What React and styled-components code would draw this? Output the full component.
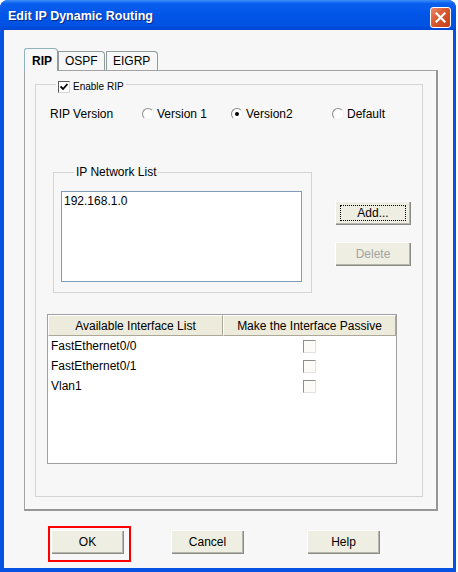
import React from "react";
import styled, { createGlobalStyle } from "styled-components";

const GlobalStyle = createGlobalStyle`
  html, body {
    margin: 0;
    padding: 0;
    background: #ffffff;
  }
  body {
    font-family: "Liberation Sans", Arial, sans-serif;
    font-size: 12px;
    color: #000;
  }
`;

const Window = styled.div`
  width: 456px;
  height: 572px;
  display: flex;
  flex-direction: column;
  background: #0552e3;
  border-radius: 8px 8px 0 0;
  overflow: hidden;
`;

const TitleBar = styled.div`
  height: 30px;
  flex: none;
  display: flex;
  align-items: center;
  justify-content: space-between;
  padding: 0 5px 0 8px;
  background: linear-gradient(
    to bottom,
    #3d8ef8 0%,
    #0a5fee 12%,
    #0056e8 45%,
    #0052e2 85%,
    #0047d2 100%
  );
`;

const Title = styled.span`
  color: #fff;
  font-weight: bold;
  font-size: 12.5px;
  text-shadow: 1px 1px 0 #0a2a8a;
  padding-top: 2px;
`;

const CloseButton = styled.div`
  width: 19px;
  height: 19px;
  margin-top: 4px;
  border: 1px solid #fff;
  border-radius: 3px;
  background: linear-gradient(135deg, #e98a6c 0%, #d9582f 45%, #c2401a 100%);
  display: flex;
  align-items: center;
  justify-content: center;
`;

const Client = styled.div`
  flex: 1;
  margin: 0 3px 4px 4px;
  background: #f7f7f7;
  padding: 18px 0 0 20px;
`;

const TabStrip = styled.div`
  display: flex;
  align-items: flex-end;
  height: 22px;
`;

const Tab = styled.div`
  box-sizing: border-box;
  width: ${(p) => p.$w}px;
  height: ${(p) => (p.$active ? 23 : 19)}px;
  margin-bottom: ${(p) => (p.$active ? -1 : 0)}px;
  margin-right: ${(p) => (p.$active ? 0 : 1)}px;
  position: relative;
  z-index: ${(p) => (p.$active ? 2 : 0)};
  display: flex;
  align-items: ${(p) => (p.$active ? "flex-start" : "center")};
  padding: ${(p) => (p.$active ? "5px 0 0 7px" : "0 0 0 6px")};
  background: #f7f7f7;
  border: 1px solid #919b9c;
  border-bottom: none;
  border-top-color: ${(p) => (p.$active ? "#8fb4bd" : "#919b9c")};
  border-left-color: ${(p) => (p.$active ? "#8fb4bd" : "#919b9c")};
  border-radius: ${(p) => (p.$active ? "3px 4px 0 0" : "0 4px 0 0")};
  font-weight: ${(p) => (p.$active ? "bold" : "normal")};
  font-size: 12px;
`;

const Panel = styled.div`
  box-sizing: border-box;
  width: 414px;
  height: 441px;
  border: 1px solid #a3a3a3;
  border-right: 2px solid #969696;
  border-bottom: 2px solid #969696;
  padding: 3px 0 0 10px;
  background: #f7f7f7;
`;

const GroupBox = styled.fieldset`
  box-sizing: border-box;
  width: ${(p) => p.$w}px;
  margin: 0;
  padding: ${(p) => p.$pad || "0"};
  border: 1px solid #d4d4d4;
  min-width: 0;
`;

const Legend = styled.legend`
  margin-left: ${(p) => p.$ml ?? 20}px;
  padding: ${(p) => (p.$check ? "6px 2px 0" : "0 2px")};
  line-height: 14px;
  font-size: ${(p) => (p.$check ? "10px" : "12px")};
  display: flex;
  align-items: center;
  gap: 3px;
`;

const CheckBox = styled.span`
  box-sizing: border-box;
  display: inline-flex;
  align-items: center;
  justify-content: center;
  width: ${(p) => p.$size || 13}px;
  height: ${(p) => p.$size || 13}px;
  background: ${(p) => (p.$dim ? "#fcfbf8" : "#fff")};
  border: 1px solid;
  border-color: ${(p) =>
    p.$dim ? "#8e8e8e #e2e2e2 #e2e2e2 #8e8e8e" : "#5a5a5a #d8d8d8 #d8d8d8 #5a5a5a"};
`;

const VersionRow = styled.div`
  display: grid;
  grid-template-columns: 92px 89px 101px auto;
  align-items: center;
  height: 16px;
  margin: 12px 0 0 14px;
`;

const RadioOption = styled.label`
  display: flex;
  align-items: center;
  gap: 3px;
`;

const Radio = styled.span`
  box-sizing: border-box;
  width: 12px;
  height: 12px;
  border-radius: 50%;
  background: #fff;
  border: 1px solid;
  border-color: #8a8a8a #f0f0f0 #f0f0f0 #8a8a8a;
  display: inline-flex;
  align-items: center;
  justify-content: center;
  &::after {
    content: "";
    width: 4px;
    height: 4px;
    border-radius: 50%;
    background: ${(p) => (p.$on ? "#000" : "transparent")};
  }
`;

const MiddleRow = styled.div`
  display: flex;
  align-items: flex-start;
  margin: 43px 0 0 17px;
`;

const ListBox = styled.div`
  box-sizing: border-box;
  width: 241px;
  height: 91px;
  background: #fff;
  border: 1px solid #7f9db9;
  padding: 2px 2px;
  line-height: 14px;
`;

const ButtonColumn = styled.div`
  display: flex;
  flex-direction: column;
  gap: 17px;
  margin: 36px 0 0 23px;
`;

const Button = styled.button`
  box-sizing: border-box;
  width: ${(p) => p.$w || 73}px;
  height: 24px;
  margin: 0;
  padding: 0;
  font-family: "Liberation Sans", Arial, sans-serif;
  font-size: 12px;
  color: ${(p) => (p.disabled ? "#a3a3a3" : "#000")};
  background: #efeee2;
  border: none;
  box-shadow: inset 1px 1px 0 #ffffff, inset -1px -1px 0 #8a8a86,
    inset -2px -2px 0 #b8b7ae;
  display: flex;
  align-items: center;
  justify-content: center;
`;

const FocusLabel = styled.span`
  border: 1px dotted #000;
  width: 66px;
  height: 16px;
  box-sizing: border-box;
  display: flex;
  align-items: center;
  justify-content: center;
  margin-bottom: 1px;
`;

const Table = styled.div`
  box-sizing: border-box;
  width: 350px;
  height: 150px;
  margin: 21px 0 0 11px;
  border: 1px solid #a0a0a0;
  background: #fff;
`;

const HeaderRow = styled.div`
  display: grid;
  grid-template-columns: 175px 1fr;
  height: 21px;
`;

const HeaderCell = styled.div`
  display: flex;
  align-items: center;
  justify-content: center;
  background: #ecebdc;
  border-top: 1px solid #fff;
  border-left: 1px solid #fff;
  border-right: 1px solid #aca899;
  border-bottom: 1px solid #aca899;
`;

const Row = styled.div`
  display: grid;
  grid-template-columns: 175px 1fr;
  height: 20px;
  align-items: center;
`;

const Cell = styled.div`
  padding-left: ${(p) => (p.$center ? 0 : 3)}px;
  display: flex;
  justify-content: ${(p) => (p.$center ? "center" : "flex-start")};
`;

const ButtonRow = styled.div`
  display: flex;
  align-items: flex-start;
  margin-top: 15px;
  padding-left: 24px;
`;

const RedMark = styled.div`
  border: 2px solid #ff0000;
  padding: 2px 5px 6px 1px;
`;

const Spaced = styled.div`
  margin: 4px 0 0 ${(p) => p.$ml}px;
`;

const interfaces = ["FastEthernet0/0", "FastEthernet0/1", "Vlan1"];

export default function App() {
  return (
    <>
      <GlobalStyle />
      <Window>
        <TitleBar>
          <Title>Edit IP Dynamic Routing</Title>
          <CloseButton>
            <svg width="11" height="11" viewBox="0 0 11 11">
              <path
                d="M1.5 1.5 L9.5 9.5 M9.5 1.5 L1.5 9.5"
                stroke="#fff"
                strokeWidth="2.2"
                strokeLinecap="square"
              />
            </svg>
          </CloseButton>
        </TitleBar>
        <Client>
          <TabStrip>
            <Tab $active $w={34}>RIP</Tab>
            <Tab $w={47}>OSPF</Tab>
            <Tab $w={52}>EIGRP</Tab>
          </TabStrip>
          <Panel>
            <GroupBox $w={388} $pad="0 0 32px 0">
              <Legend $check>
                <CheckBox $size={12}>
                  <svg width="8" height="8" viewBox="0 0 8 8">
                    <path
                      d="M0.5 3.5 L3 6 L7.5 1"
                      stroke="#000"
                      strokeWidth="1.8"
                      fill="none"
                    />
                  </svg>
                </CheckBox>
                Enable RIP
              </Legend>
              <VersionRow>
                <span>RIP Version</span>
                <RadioOption>
                  <Radio />
                  Version 1
                </RadioOption>
                <RadioOption>
                  <Radio $on />
                  Version2
                </RadioOption>
                <RadioOption>
                  <Radio />
                  Default
                </RadioOption>
              </VersionRow>
              <MiddleRow>
                <GroupBox $w={259} $pad="12px 9px 10px 7px">
                  <Legend $ml={13}>IP Network List</Legend>
                  <ListBox>192.168.1.0</ListBox>
                </GroupBox>
                <ButtonColumn>
                  <Button $w={76}>
                    <FocusLabel>Add...</FocusLabel>
                  </Button>
                  <Button $w={76} disabled>
                    Delete
                  </Button>
                </ButtonColumn>
              </MiddleRow>
              <Table>
                <HeaderRow>
                  <HeaderCell>Available Interface List</HeaderCell>
                  <HeaderCell>Make the Interface Passive</HeaderCell>
                </HeaderRow>
                {interfaces.map((name) => (
                  <Row key={name}>
                    <Cell>{name}</Cell>
                    <Cell $center>
                      <CheckBox $dim />
                    </Cell>
                  </Row>
                ))}
              </Table>
            </GroupBox>
          </Panel>
          <ButtonRow>
            <RedMark>
              <Button>OK</Button>
            </RedMark>
            <Spaced $ml={40}>
              <Button>Cancel</Button>
            </Spaced>
            <Spaced $ml={63}>
              <Button>Help</Button>
            </Spaced>
          </ButtonRow>
        </Client>
      </Window>
    </>
  );
}
